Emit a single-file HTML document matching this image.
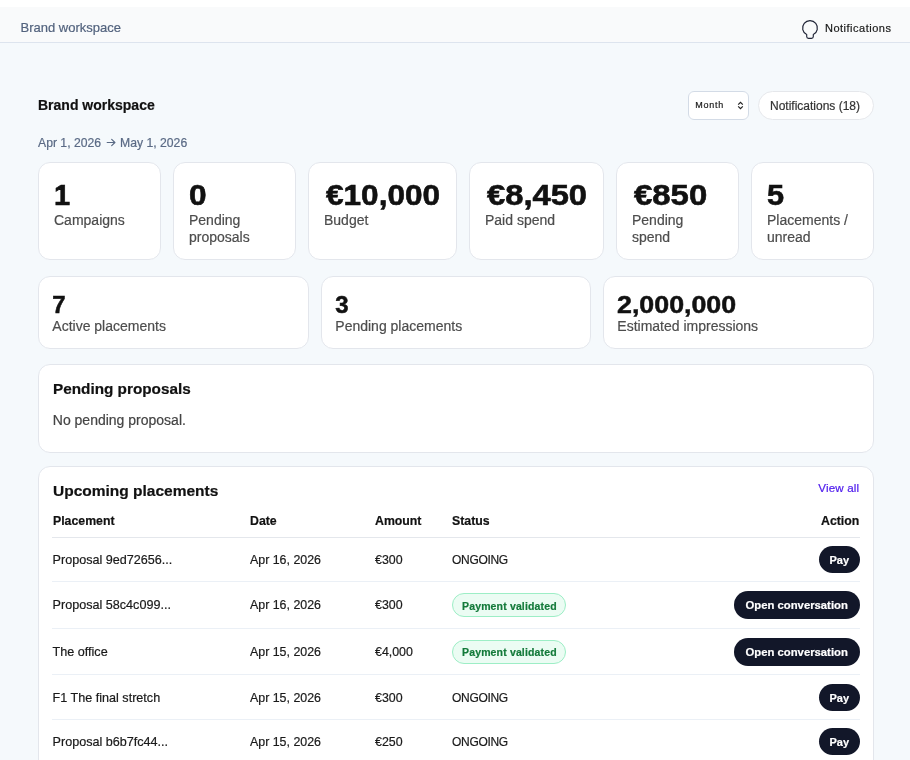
<!DOCTYPE html>
<html><head><meta charset="utf-8"><style>
html,body{margin:0;padding:0;}
body{width:910px;height:760px;overflow:hidden;position:relative;background:#f5f9fc;font-family:"Liberation Sans", sans-serif;}
#w{position:absolute;left:0;top:0;width:910px;height:760px;will-change:transform;}
#w div{-webkit-text-stroke:0.2px currentColor;}
</style></head><body><div id="w">
<div style="position:absolute;left:0px;top:0px;width:910px;height:7px;background:#ffffff"></div>
<div style="position:absolute;left:0px;top:7px;width:910px;height:35px;background:#f9fafb"></div>
<div style="position:absolute;left:0px;top:42px;width:910px;height:1px;background:#dde4ee"></div>
<div style="position:absolute;left:20.5px;top:21.00px;font-size:13px;line-height:13px;font-weight:400;color:#53637e;white-space:nowrap;">Brand workspace</div>
<svg style="position:absolute;left:801px;top:19px" width="19" height="21" viewBox="0 0 19 21"><path d="M5.7 15.6 A7.4 7.4 0 1 1 12.3 15.6 L12.3 17.5 Q12.3 19.3 10.5 19.3 L7.5 19.3 Q5.7 19.3 5.7 17.5 Z" fill="none" stroke="#1f2336" stroke-width="1.15" stroke-linejoin="round"/></svg>
<div style="position:absolute;left:825px;top:23.09px;font-size:11px;line-height:11px;font-weight:400;color:#1a1a1a;white-space:nowrap;letter-spacing:0.5px;">Notifications</div>
<div style="position:absolute;left:38px;top:98.15px;font-size:14px;line-height:14px;font-weight:700;color:#111;white-space:nowrap;">Brand workspace</div>
<div style="position:absolute;left:688px;top:91px;width:61px;height:29px;background:#fff;border:1px solid #d3dbe6;border-radius:6px;box-sizing:border-box"></div>
<div style="position:absolute;left:695.3px;top:100.68px;font-size:9px;line-height:9px;font-weight:400;color:#1a1a1a;white-space:nowrap;letter-spacing:0.75px;">Month</div>
<svg style="position:absolute;left:737px;top:101px" width="7" height="9" viewBox="0 0 7 9"><path d="M1.2 3.6 L3.5 1.3 L5.8 3.6 M1.2 5.4 L3.5 7.7 L5.8 5.4" fill="none" stroke="#222" stroke-width="1.2"/></svg>
<div style="position:absolute;left:758px;top:91px;width:116px;height:29px;background:#fff;border:1px solid #e5e7eb;border-radius:15px;box-sizing:border-box"></div>
<div style="position:absolute;left:770px;top:99.84px;font-size:12px;line-height:12px;font-weight:400;color:#333;white-space:nowrap;">Notifications (18)</div>
<div style="position:absolute;left:38px;top:136.67px;font-size:12.2px;line-height:12.2px;font-weight:400;color:#5a6a85;white-space:nowrap;">Apr 1, 2026</div>
<svg style="position:absolute;left:106.3px;top:138px" width="11" height="9" viewBox="0 0 11 9"><path d="M1.2 4.5 H8.9 M5.7 1.4 L8.9 4.5 L5.7 7.6" fill="none" stroke="#5a6a85" stroke-width="1.2" stroke-linecap="round" stroke-linejoin="round"/></svg>
<div style="position:absolute;left:120.1px;top:136.67px;font-size:12.2px;line-height:12.2px;font-weight:400;color:#5a6a85;white-space:nowrap;">May 1, 2026</div>
<div style="position:absolute;left:38px;top:162px;width:123px;height:98px;background:#fff;border:1px solid #e3e6ec;border-radius:12px;box-sizing:border-box"></div>
<div style="position:absolute;left:54px;top:180.95px;font-size:29px;line-height:29px;font-weight:700;color:#111;white-space:nowrap;transform:scaleX(1.0);transform-origin:0 0;-webkit-text-stroke:0.6px #111;">1</div>
<div style="position:absolute;left:54px;top:213.15px;font-size:14px;line-height:14px;font-weight:400;color:#4d4d4d;white-space:nowrap;">Campaigns</div>
<div style="position:absolute;left:173px;top:162px;width:123px;height:98px;background:#fff;border:1px solid #e3e6ec;border-radius:12px;box-sizing:border-box"></div>
<div style="position:absolute;left:189px;top:180.95px;font-size:29px;line-height:29px;font-weight:700;color:#111;white-space:nowrap;transform:scaleX(1.09);transform-origin:0 0;-webkit-text-stroke:0.6px #111;">0</div>
<div style="position:absolute;left:189px;top:213.15px;font-size:14px;line-height:14px;font-weight:400;color:#4d4d4d;white-space:nowrap;">Pending</div>
<div style="position:absolute;left:189px;top:229.55px;font-size:14px;line-height:14px;font-weight:400;color:#4d4d4d;white-space:nowrap;">proposals</div>
<div style="position:absolute;left:308px;top:162px;width:149px;height:98px;background:#fff;border:1px solid #e3e6ec;border-radius:12px;box-sizing:border-box"></div>
<div style="position:absolute;left:325.5px;top:180.95px;font-size:29px;line-height:29px;font-weight:700;color:#111;white-space:nowrap;transform:scaleX(1.088);transform-origin:0 0;-webkit-text-stroke:0.6px #111;">€10,000</div>
<div style="position:absolute;left:324px;top:213.15px;font-size:14px;line-height:14px;font-weight:400;color:#4d4d4d;white-space:nowrap;">Budget</div>
<div style="position:absolute;left:469px;top:162px;width:135px;height:98px;background:#fff;border:1px solid #e3e6ec;border-radius:12px;box-sizing:border-box"></div>
<div style="position:absolute;left:486.5px;top:180.95px;font-size:29px;line-height:29px;font-weight:700;color:#111;white-space:nowrap;transform:scaleX(1.128);transform-origin:0 0;-webkit-text-stroke:0.6px #111;">€8,450</div>
<div style="position:absolute;left:485px;top:213.15px;font-size:14px;line-height:14px;font-weight:400;color:#4d4d4d;white-space:nowrap;">Paid spend</div>
<div style="position:absolute;left:616px;top:162px;width:123px;height:98px;background:#fff;border:1px solid #e3e6ec;border-radius:12px;box-sizing:border-box"></div>
<div style="position:absolute;left:633.5px;top:180.95px;font-size:29px;line-height:29px;font-weight:700;color:#111;white-space:nowrap;transform:scaleX(1.135);transform-origin:0 0;-webkit-text-stroke:0.6px #111;">€850</div>
<div style="position:absolute;left:632px;top:213.15px;font-size:14px;line-height:14px;font-weight:400;color:#4d4d4d;white-space:nowrap;">Pending</div>
<div style="position:absolute;left:632px;top:229.55px;font-size:14px;line-height:14px;font-weight:400;color:#4d4d4d;white-space:nowrap;">spend</div>
<div style="position:absolute;left:751px;top:162px;width:123px;height:98px;background:#fff;border:1px solid #e3e6ec;border-radius:12px;box-sizing:border-box"></div>
<div style="position:absolute;left:767px;top:180.95px;font-size:29px;line-height:29px;font-weight:700;color:#111;white-space:nowrap;transform:scaleX(1.06);transform-origin:0 0;-webkit-text-stroke:0.6px #111;">5</div>
<div style="position:absolute;left:767px;top:213.15px;font-size:14px;line-height:14px;font-weight:400;color:#4d4d4d;white-space:nowrap;">Placements /</div>
<div style="position:absolute;left:767px;top:229.55px;font-size:14px;line-height:14px;font-weight:400;color:#4d4d4d;white-space:nowrap;">unread</div>
<div style="position:absolute;left:38px;top:276px;width:271px;height:73px;background:#fff;border:1px solid #e3e6ec;border-radius:12px;box-sizing:border-box"></div>
<div style="position:absolute;left:52.3px;top:292.88px;font-size:24px;line-height:24px;font-weight:700;color:#111;white-space:nowrap;transform:scaleX(1.0);transform-origin:0 0;-webkit-text-stroke:0.5px #111;">7</div>
<div style="position:absolute;left:52.3px;top:319.15px;font-size:14px;line-height:14px;font-weight:400;color:#4d4d4d;white-space:nowrap;">Active placements</div>
<div style="position:absolute;left:321px;top:276px;width:270px;height:73px;background:#fff;border:1px solid #e3e6ec;border-radius:12px;box-sizing:border-box"></div>
<div style="position:absolute;left:335.3px;top:292.88px;font-size:24px;line-height:24px;font-weight:700;color:#111;white-space:nowrap;transform:scaleX(1.0);transform-origin:0 0;-webkit-text-stroke:0.5px #111;">3</div>
<div style="position:absolute;left:335.3px;top:319.15px;font-size:14px;line-height:14px;font-weight:400;color:#4d4d4d;white-space:nowrap;">Pending placements</div>
<div style="position:absolute;left:603px;top:276px;width:271px;height:73px;background:#fff;border:1px solid #e3e6ec;border-radius:12px;box-sizing:border-box"></div>
<div style="position:absolute;left:617.3px;top:292.88px;font-size:24px;line-height:24px;font-weight:700;color:#111;white-space:nowrap;transform:scaleX(1.116);transform-origin:0 0;-webkit-text-stroke:0.5px #111;">2,000,000</div>
<div style="position:absolute;left:617.3px;top:319.15px;font-size:14px;line-height:14px;font-weight:400;color:#4d4d4d;white-space:nowrap;">Estimated impressions</div>
<div style="position:absolute;left:38px;top:364px;width:836px;height:89px;background:#fff;border:1px solid #e3e6ec;border-radius:12px;box-sizing:border-box"></div>
<div style="position:absolute;left:53px;top:380.65px;font-size:15.3px;line-height:15.3px;font-weight:700;color:#111;white-space:nowrap;">Pending proposals</div>
<div style="position:absolute;left:52.8px;top:412.95px;font-size:14px;line-height:14px;font-weight:400;color:#444;white-space:nowrap;">No pending proposal.</div>
<div style="position:absolute;left:38px;top:466px;width:836px;height:320px;background:#fff;border:1px solid #e3e6ec;border-radius:12px;box-sizing:border-box"></div>
<div style="position:absolute;left:53px;top:483.38px;font-size:15.5px;line-height:15.5px;font-weight:700;color:#111;white-space:nowrap;">Upcoming placements</div>
<div style="position:absolute;right:50.700000000000045px;top:482.38px;font-size:11.6px;line-height:11.6px;font-weight:400;color:#4f1ced;white-space:nowrap;letter-spacing:0.15px;">View all</div>
<div style="position:absolute;left:53px;top:514.59px;font-size:12.3px;line-height:12.3px;font-weight:700;color:#111;white-space:nowrap;">Placement</div>
<div style="position:absolute;left:250px;top:514.59px;font-size:12.3px;line-height:12.3px;font-weight:700;color:#111;white-space:nowrap;">Date</div>
<div style="position:absolute;left:375px;top:514.59px;font-size:12.3px;line-height:12.3px;font-weight:700;color:#111;white-space:nowrap;">Amount</div>
<div style="position:absolute;left:452px;top:514.59px;font-size:12.3px;line-height:12.3px;font-weight:700;color:#111;white-space:nowrap;">Status</div>
<div style="position:absolute;right:50.700000000000045px;top:514.59px;font-size:12.3px;line-height:12.3px;font-weight:700;color:#111;white-space:nowrap;">Action</div>
<div style="position:absolute;left:52px;top:537px;width:808px;height:1px;background:#e4e7ec"></div>
<div style="position:absolute;left:52px;top:581px;width:808px;height:1px;background:#ebf0f6"></div>
<div style="position:absolute;left:52px;top:628px;width:808px;height:1px;background:#ebf0f6"></div>
<div style="position:absolute;left:52px;top:674px;width:808px;height:1px;background:#ebf0f6"></div>
<div style="position:absolute;left:52px;top:719px;width:808px;height:1px;background:#ebf0f6"></div>
<div style="position:absolute;left:52.6px;top:553.73px;font-size:12.6px;line-height:12.6px;font-weight:400;color:#1a1a1a;white-space:nowrap;">Proposal 9ed72656...</div>
<div style="position:absolute;left:250px;top:553.90px;font-size:12.4px;line-height:12.4px;font-weight:400;color:#1a1a1a;white-space:nowrap;">Apr 16, 2026</div>
<div style="position:absolute;left:375px;top:553.90px;font-size:12.4px;line-height:12.4px;font-weight:400;color:#1a1a1a;white-space:nowrap;">€300</div>
<div style="position:absolute;left:452px;top:553.74px;font-size:12px;line-height:12px;font-weight:400;color:#1a1a1a;white-space:nowrap;letter-spacing:-0.3px;">ONGOING</div>
<div style="position:absolute;left:819px;top:546px;width:41px;height:27px;background:#121729;border-radius:14px"></div>
<div style="position:absolute;left:829.5px;top:554.89px;font-size:11px;line-height:11px;font-weight:700;color:#fff;white-space:nowrap;">Pay</div>
<div style="position:absolute;left:52.6px;top:599.03px;font-size:12.6px;line-height:12.6px;font-weight:400;color:#1a1a1a;white-space:nowrap;">Proposal 58c4c099...</div>
<div style="position:absolute;left:250px;top:599.20px;font-size:12.4px;line-height:12.4px;font-weight:400;color:#1a1a1a;white-space:nowrap;">Apr 16, 2026</div>
<div style="position:absolute;left:375px;top:599.20px;font-size:12.4px;line-height:12.4px;font-weight:400;color:#1a1a1a;white-space:nowrap;">€300</div>
<div style="position:absolute;left:452px;top:593.2px;width:114px;height:24px;background:#ebfcf3;border:1px solid #9deec6;border-radius:12px;box-sizing:border-box"></div>
<div style="position:absolute;left:462px;top:600.51px;font-size:10.5px;line-height:10.5px;font-weight:700;color:#137a3a;white-space:nowrap;letter-spacing:0.15px;">Payment validated</div>
<div style="position:absolute;left:734px;top:591px;width:126px;height:28px;background:#121729;border-radius:14px"></div>
<div style="position:absolute;left:745.5px;top:599.93px;font-size:11.3px;line-height:11.3px;font-weight:700;color:#fff;white-space:nowrap;">Open conversation</div>
<div style="position:absolute;left:52.6px;top:645.83px;font-size:12.6px;line-height:12.6px;font-weight:400;color:#1a1a1a;white-space:nowrap;">The office</div>
<div style="position:absolute;left:250px;top:646.00px;font-size:12.4px;line-height:12.4px;font-weight:400;color:#1a1a1a;white-space:nowrap;">Apr 15, 2026</div>
<div style="position:absolute;left:375px;top:646.00px;font-size:12.4px;line-height:12.4px;font-weight:400;color:#1a1a1a;white-space:nowrap;">€4,000</div>
<div style="position:absolute;left:452px;top:640.0px;width:114px;height:24px;background:#ebfcf3;border:1px solid #9deec6;border-radius:12px;box-sizing:border-box"></div>
<div style="position:absolute;left:462px;top:647.31px;font-size:10.5px;line-height:10.5px;font-weight:700;color:#137a3a;white-space:nowrap;letter-spacing:0.15px;">Payment validated</div>
<div style="position:absolute;left:734px;top:637.8px;width:126px;height:28px;background:#121729;border-radius:14px"></div>
<div style="position:absolute;left:745.5px;top:646.73px;font-size:11.3px;line-height:11.3px;font-weight:700;color:#fff;white-space:nowrap;">Open conversation</div>
<div style="position:absolute;left:52.6px;top:691.93px;font-size:12.6px;line-height:12.6px;font-weight:400;color:#1a1a1a;white-space:nowrap;">F1 The final stretch</div>
<div style="position:absolute;left:250px;top:692.10px;font-size:12.4px;line-height:12.4px;font-weight:400;color:#1a1a1a;white-space:nowrap;">Apr 15, 2026</div>
<div style="position:absolute;left:375px;top:692.10px;font-size:12.4px;line-height:12.4px;font-weight:400;color:#1a1a1a;white-space:nowrap;">€300</div>
<div style="position:absolute;left:452px;top:691.94px;font-size:12px;line-height:12px;font-weight:400;color:#1a1a1a;white-space:nowrap;letter-spacing:-0.3px;">ONGOING</div>
<div style="position:absolute;left:819px;top:684px;width:41px;height:27px;background:#121729;border-radius:14px"></div>
<div style="position:absolute;left:829.5px;top:692.89px;font-size:11px;line-height:11px;font-weight:700;color:#fff;white-space:nowrap;">Pay</div>
<div style="position:absolute;left:52.6px;top:735.83px;font-size:12.6px;line-height:12.6px;font-weight:400;color:#1a1a1a;white-space:nowrap;">Proposal b6b7fc44...</div>
<div style="position:absolute;left:250px;top:736.00px;font-size:12.4px;line-height:12.4px;font-weight:400;color:#1a1a1a;white-space:nowrap;">Apr 15, 2026</div>
<div style="position:absolute;left:375px;top:736.00px;font-size:12.4px;line-height:12.4px;font-weight:400;color:#1a1a1a;white-space:nowrap;">€250</div>
<div style="position:absolute;left:452px;top:735.84px;font-size:12px;line-height:12px;font-weight:400;color:#1a1a1a;white-space:nowrap;letter-spacing:-0.3px;">ONGOING</div>
<div style="position:absolute;left:819px;top:728px;width:41px;height:27px;background:#121729;border-radius:14px"></div>
<div style="position:absolute;left:829.5px;top:736.89px;font-size:11px;line-height:11px;font-weight:700;color:#fff;white-space:nowrap;">Pay</div>
</div></body></html>
